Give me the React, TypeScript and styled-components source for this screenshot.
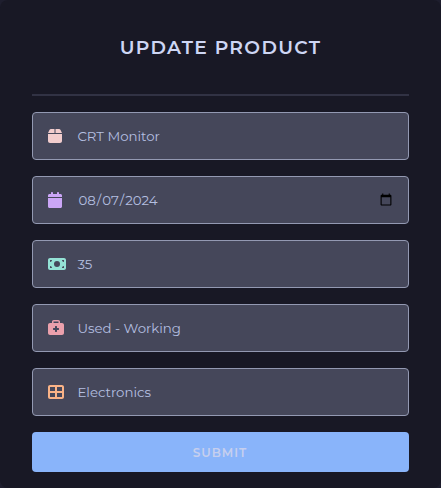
import React from "react";
import styled, { createGlobalStyle } from "styled-components";
import {
  FaBox,
  FaBriefcaseMedical,
  FaCalendar,
  FaMoneyBill,
  FaTableCellsLarge,
} from "react-icons/fa6";

const GlobalStyle = createGlobalStyle`
  * { box-sizing: border-box; }
  body {
    margin: 0;
    background: #1e1e2e;
    font-family: Montserrat, Inter, "Liberation Sans", sans-serif;
  }
`;

const Card = styled.form`
  display: flex;
  flex-direction: column;
  gap: 16px;
  height: 488px;
  padding: 0 32px 16px;
  border-radius: 8px;
  background: #181825;
`;

const Header = styled.header`
  height: 96px;
  flex: none;
  display: flex;
  justify-content: center;
  border-bottom: 2px solid #313244;
`;

const Title = styled.h1`
  margin: 0;
  line-height: 96px;
  font-size: 18.72px;
  font-weight: 600;
  letter-spacing: 1.33px;
  color: #cdd6f4;
  white-space: nowrap;
`;

const Field = styled.label`
  height: 48px;
  flex: none;
  display: flex;
  align-items: center;
  padding: 0 13px 0 15px;
  border: 1px solid #9399b2;
  border-radius: 4px;
  background: #45475a;
`;

const IconSlot = styled.span<{ $color: string; $width: number }>`
  width: 29.4px;
  flex: none;
  display: flex;
  color: ${(p) => p.$color};

  svg {
    width: ${(p) => p.$width}px;
    height: 16px;
  }
`;

const Input = styled.input`
  flex: 1;
  min-width: 0;
  height: 24px;
  padding: 0;
  border: 0;
  outline: 0;
  background: transparent;
  color: #b4bfe0;
  font-family: inherit;
  font-size: 13.333px;

  &::-webkit-calendar-picker-indicator {
    width: 14px;
    height: 14px;
  }
`;

const Submit = styled.button`
  height: 40px;
  flex: none;
  padding: 0 1px 0 0;
  border: 0;
  border-radius: 4px;
  background: #89b4fa;
  color: #c6cfee;
  font-family: inherit;
  font-size: 12px;
  font-weight: 600;
  letter-spacing: 1px;
`;

const fields = [
  { name: "name", type: "text", value: "CRT Monitor", icon: FaBox, color: "#f2cdcd", width: 14 },
  { name: "date", type: "date", value: "2024-08-07", icon: FaCalendar, color: "#cba6f7", width: 14 },
  { name: "price", type: "text", value: "35", icon: FaMoneyBill, color: "#94e2d5", width: 18 },
  { name: "condition", type: "text", value: "Used - Working", icon: FaBriefcaseMedical, color: "#eba0ac", width: 16 },
  { name: "category", type: "text", value: "Electronics", icon: FaTableCellsLarge, color: "#fab387", width: 16 },
];

export default function App() {
  return (
    <>
      <GlobalStyle />
      <Card onSubmit={(event) => event.preventDefault()}>
        <Header>
          <Title>UPDATE PRODUCT</Title>
        </Header>
        {fields.map(({ name, type, value, icon: Icon, color, width }) => (
          <Field key={name}>
            <IconSlot $color={color} $width={width}>
              <Icon />
            </IconSlot>
            <Input name={name} type={type} defaultValue={value} />
          </Field>
        ))}
        <Submit type="submit">SUBMIT</Submit>
      </Card>
    </>
  );
}
